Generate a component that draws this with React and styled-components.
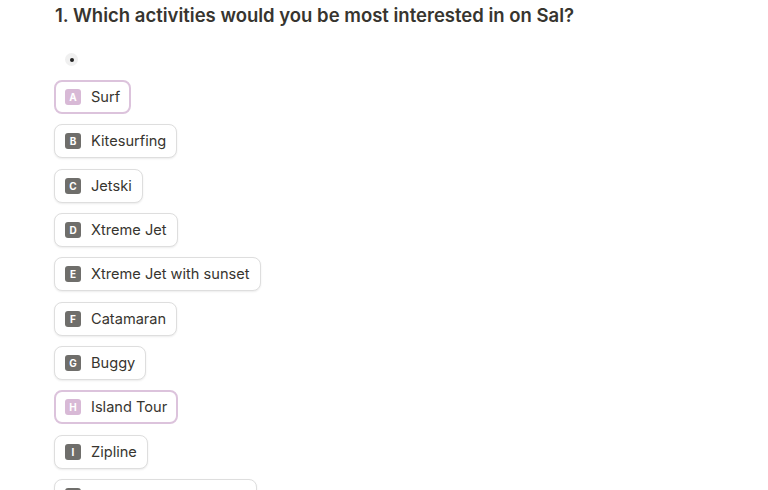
import React from "react";
import styled, { createGlobalStyle } from "styled-components";

const GlobalStyle = createGlobalStyle`
  html, body {
    margin: 0;
    padding: 0;
    background: #fff;
    font-family: Inter, "Noto Sans", sans-serif;
    color: #333;
  }
`;

const Page = styled.div`
  padding: 0 0 0 54px;
  height: 490px;
  overflow: hidden;
`;

const Question = styled.h1`
  margin: 0 0 0 1px;
  padding-top: 2px;
  font-size: 18.5px;
  line-height: 26px;
  font-weight: 600;
  color: #37352f;
`;

const Required = styled.div`
  width: 13px;
  height: 13px;
  margin: 25px 0 0 11px;
  border-radius: 50%;
  background: #f0f0f0;
  display: flex;
  align-items: center;
  justify-content: center;
  &::after{
    content: "";
    width: 4px;
    height: 4px;
    border-radius: 50%;
    background: #222;
  }
`;

const Options = styled.div`
  display: flex;
  flex-direction: column;
  align-items: flex-start;
  gap: 10.33px;
  margin-top: 14px;
`;

const Option = styled.button`
  display: flex;
  align-items: center;
  gap: 10px;
  height: 34px;
  box-sizing: border-box;
  background: #fff;
  border: ${p => (p.$active ? "2px solid #dcc3dc" : "1px solid #dedede")};
  border-radius: 8px;
  box-shadow: ${p => (p.$active ? "none" : "0 1px 2px rgba(0,0,0,0.08)")};
  padding: 0 ${p => (p.$active ? "9px" : "10px")};
  font-family: inherit;
  font-size: 14.6px;
  color: #37352f;
  cursor: pointer;
`;

const Key = styled.span`
  width: 16px;
  height: 16px;
  border-radius: 3px;
  background: ${p => (p.$active ? "#d8b9d6" : "#6f6e6b")};
  color: #fff;
  font-size: 10px;
  font-weight: 700;
  display: flex;
  align-items: center;
  justify-content: center;
  line-height: 1;
`;

const options = [
  { key: "A", label: "Surf", active: true },
  { key: "B", label: "Kitesurfing" },
  { key: "C", label: "Jetski" },
  { key: "D", label: "Xtreme Jet" },
  { key: "E", label: "Xtreme Jet with sunset" },
  { key: "F", label: "Catamaran" },
  { key: "G", label: "Buggy" },
  { key: "H", label: "Island Tour", active: true },
  { key: "I", label: "Zipline" },
  { key: "J", label: "Whale Watching Tours" },
];

export default function App() {
  return (
    <Page>
      <GlobalStyle />
      <Question>1. Which activities would you be most interested in on Sal?</Question>
      <Required />
      <Options>
        {options.map(o => (
          <Option key={o.key} $active={o.active}>
            <Key $active={o.active}>{o.key}</Key>
            {o.label}
          </Option>
        ))}
      </Options>
    </Page>
  );
}
